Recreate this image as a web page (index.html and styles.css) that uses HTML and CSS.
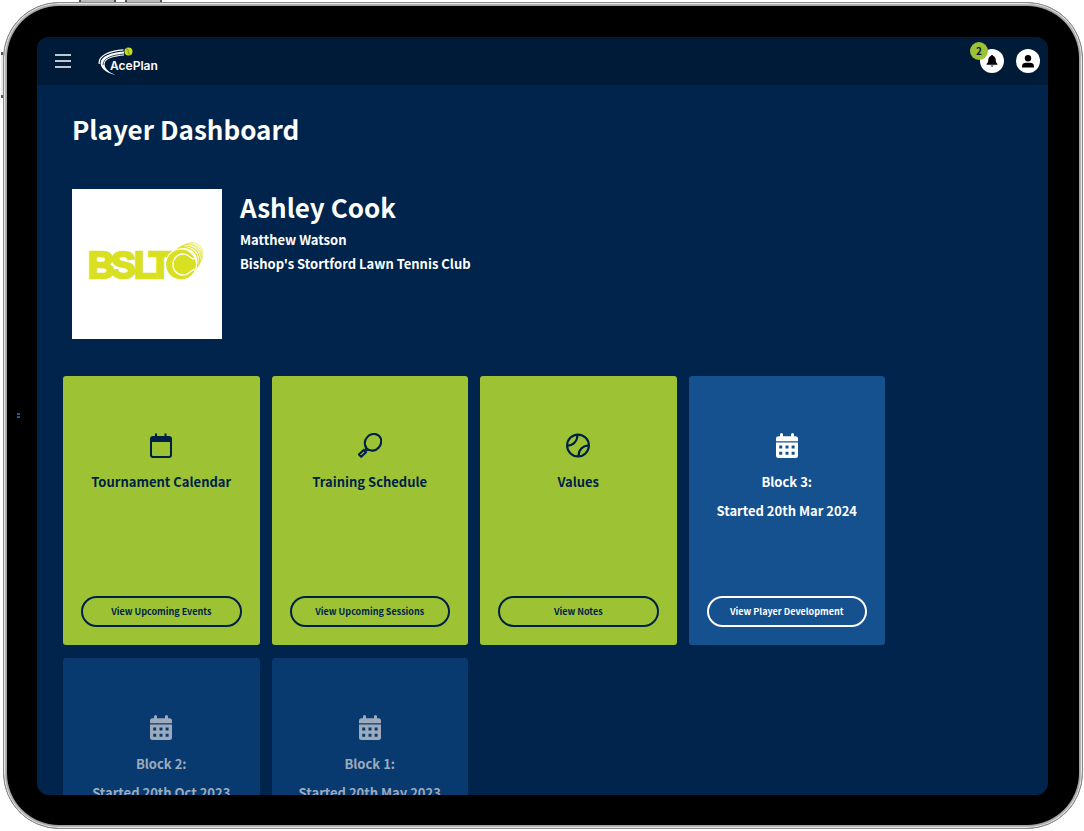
FILE: index.html
```html
<!DOCTYPE html>
<html lang="en">
<head>
<meta charset="utf-8">
<meta name="viewport" content="width=device-width, initial-scale=1">
<title>AcePlan – Player Dashboard</title>
<link rel="stylesheet" href="styles.css">
</head>
<body>
<svg class="sprite" aria-hidden="true">
  <symbol id="calendar-grid" viewBox="0 0 24 26">
    <path fill="currentColor" fill-rule="evenodd" d="M6.500 0a1.500 1.500 0 0 1 1.500 1.500V3.200h8V1.500a1.500 1.500 0 0 1 3 0V3.200h1.500A2.500 2.500 0 0 1 23 5.700V8.200H1V5.700A2.500 2.500 0 0 1 3.500 3.200H5V1.500A1.500 1.500 0 0 1 6.500 0zM1 9.600H23V22.500A2.500 2.500 0 0 1 20.500 25H3.500A2.500 2.500 0 0 1 1 22.500zM4.200 12.600v3h3v-3zM10.500 12.600v3h3v-3zM16.600 12.600v3h3v-3zM4.200 18.700v3h3v-3zM10.500 18.700v3h3v-3zM16.600 18.700v3h3v-3z"/>
  </symbol>
</svg>
<div class="device">
  <span class="side-key key-top-first"></span>
  <span class="side-key key-top-second"></span>
  <span class="side-key key-left"></span>
  <span class="camera"></span>
  <div class="screen">
    <header class="topbar">
      <button class="menu-button" type="button" aria-label="Open menu">
        <svg width="16" height="14" viewBox="0 0 16 14"><path d="M0 1h16M0 7h16M0 13h16" stroke="#fff" stroke-width="1.300"/></svg>
      </button>
      <a class="brand" href="#" aria-label="AcePlan home">
        <svg width="62" height="30" viewBox="0 -1 62 30">
          <path fill="#fff" d="M26 4.600C13 5.600 2.500 9.500 2.600 16.500C2.800 22 10 26.500 17.500 28C10.500 25 6.500 21.500 6.600 17C6.800 11.500 16 9.400 26 8.600Z"/>
          <path fill="none" stroke="#fff" stroke-width="1.200" d="M25.500 2.800C11 3.800 0 9 1.200 17"/>
          <path fill="none" stroke="#001b37" stroke-width="0.800" d="M5 18C5 11 14 8 26 7"/>
          <circle cx="30.500" cy="4.500" r="4" fill="#c3dc22"/>
          <path fill="none" stroke="#526f21" stroke-width="0.700" d="M28 1.600C32 2.500 28.500 6 32.500 7.800"/>
          <text class="brand-name" x="12" y="23">AcePlan</text>
        </svg>
      </a>
      <nav class="account">
        <button class="round-button" type="button" aria-label="Notifications, 2 unread">
          <svg width="12" height="14" viewBox="0 0 13 14"><path d="M6.500 0.500C7.200 0.500 7.600 1 7.700 1.600C9.600 2.200 10.500 3.700 10.500 5.500C10.500 8.500 11.500 9.300 12.400 10.200V11H0.600V10.200C1.500 9.300 2.500 8.500 2.500 5.500C2.500 3.700 3.400 2.200 5.300 1.600C5.400 1 5.800 0.500 6.500 0.500ZM5 12H8C7.800 13.700 5.200 13.700 5 12Z"/></svg>
          <span class="badge">2</span>
        </button>
        <button class="round-button" type="button" aria-label="Account">
          <svg width="12" height="13" viewBox="0 0 12 13"><circle cx="6" cy="3.300" r="3.200"/><path d="M0 12.500V11C0 8.700 2 7.700 4 7.700H8C10 7.700 12 8.700 12 11V12.500Z"/></svg>
        </button>
      </nav>
    </header>
    <main class="content">
      <h1 class="page-title">Player Dashboard</h1>
      <section class="profile">
        <div class="club-logo">
          <svg width="118" height="50" viewBox="0 -4 118 50" role="img" aria-label="BSLTC">
            <text class="club-letters" x="0 23 46 61" y="35">BSLT</text>
            <g fill="#fff" stroke="#d9e021" stroke-width="1.100">
              <circle cx="104" cy="10.500" r="11" stroke-opacity="0.400"/>
              <circle cx="102" cy="12.500" r="12" stroke-opacity="0.600"/>
              <circle cx="100" cy="14.500" r="13" stroke-opacity="0.800"/>
              <circle cx="98" cy="16.500" r="13.500"/>
              <circle cx="96" cy="18.500" r="14"/>
            </g>
            <circle cx="93" cy="21.500" r="15.500" fill="#d9e021" stroke="#fff" stroke-width="1.200"/>
            <path d="M108 15.500C105 18 102 13 98 11.500C91 9.500 85 14.500 85 21.500C85 28.500 91 33.500 98 31.500C102 30 103 26.500 108 26" fill="none" stroke="#fff" stroke-width="1.300"/>
          </svg>
        </div>
        <div class="profile-text">
          <h2 class="player-name">Ashley Cook</h2>
          <p class="profile-line">Matthew Watson</p>
          <p class="profile-line">Bishop's Stortford Lawn Tennis Club</p>
        </div>
      </section>
      <section class="cards">
        <article class="card card-green">
          <svg class="card-icon" viewBox="0 0 24 26"><path fill="none" stroke="currentColor" stroke-width="2" d="M2 6a2 2 0 0 1 2-2H20a2 2 0 0 1 2 2V22a2 2 0 0 1-2 2H4a2 2 0 0 1-2-2z"/><path fill="currentColor" d="M2 4H22V9H2zM6 0.500h2V5h-2zM15.500 0.500h2V5h-2z"/></svg>
          <h3 class="card-title">Tournament Calendar</h3>
          <button class="card-button" type="button">View Upcoming Events</button>
        </article>
        <article class="card card-green">
          <svg class="card-icon" viewBox="0 0 24 26"><g fill="none" stroke="currentColor" stroke-width="2.100"><ellipse cx="15" cy="9.300" rx="8.800" ry="7.800" transform="rotate(-48 15 9.300)"/><path d="M8 12.500L7.500 17.500M12.500 17L7.500 17.500" stroke-width="1.700"/><path d="M5.700 16.900L8 19.200L3.200 23.800L0.900 21.500Z" stroke-linejoin="round"/></g></svg>
          <h3 class="card-title">Training Schedule</h3>
          <button class="card-button" type="button">View Upcoming Sessions</button>
        </article>
        <article class="card card-green">
          <svg class="card-icon" viewBox="0 0 24 26"><g fill="none" stroke="currentColor" stroke-width="2.100"><circle cx="12" cy="12.500" r="10.900"/><path d="M1.200 12.500C7.500 12.500 11.500 8 11.500 1.500M12.500 23.500C12.500 17 16.500 12.500 22.800 12.500"/></g></svg>
          <h3 class="card-title">Values</h3>
          <button class="card-button" type="button">View Notes</button>
        </article>
        <article class="card card-blue">
          <svg class="card-icon"><use href="#calendar-grid"/></svg>
          <h3 class="card-title">Block 3:</h3>
          <p class="card-title">Started 20th Mar 2024</p>
          <button class="card-button" type="button">View Player Development</button>
        </article>
        <article class="card card-past">
          <svg class="card-icon"><use href="#calendar-grid"/></svg>
          <h3 class="card-title">Block 2:</h3>
          <p class="card-title">Started 20th Oct 2023</p>
        </article>
        <article class="card card-past">
          <svg class="card-icon"><use href="#calendar-grid"/></svg>
          <h3 class="card-title">Block 1:</h3>
          <p class="card-title">Started 20th May 2023</p>
        </article>
      </section>
    </main>
  </div>
</div>
</body>
</html>
```
FILE: styles.css
```css
* { box-sizing: border-box; }

body {
  margin: 0;
  height: 100vh;
  padding: 2px 1px 2px 3px;
  background: #fff;
  color: #fff;
  font-family: "Noto Sans CJK SC", "Noto Sans", sans-serif;
  font-weight: 700;
  overflow: hidden;
}

h1, h2, h3, p { margin: 0; font-weight: 700; }

button {
  font: inherit;
  color: inherit;
  padding: 0;
  border: 0;
  background: none;
}

.sprite { position: absolute; width: 0; height: 0; }

.device {
  position: relative;
  height: 100%;
  padding: 34px 34px 33px 33px;
  border: 1px solid #8b8c8c;
  border-radius: 56px;
  background: #000;
  box-shadow: inset 0 0 0 1px #e4e5e5, inset 0 0 0 2px #b5b6b6, inset 0 0 0 3px #a0a1a1;
}

.side-key { position: absolute; background: #b9bbba; }

.key-top-first, .key-top-second {
  top: -3px;
  width: 37px;
  height: 2px;
  border: solid #555;
  border-width: 0 2px;
}

.key-top-first { left: 75px; }
.key-top-second { left: 121px; }

.key-left {
  left: -3px;
  top: 49px;
  width: 2px;
  height: 46px;
  border: solid #555;
  border-width: 3px 0;
  background: #e8e9e9;
}

.camera {
  position: absolute;
  left: 13px;
  top: calc(50% - 3px);
  width: 3px;
  height: 5px;
  border: solid #0f5cad;
  border-width: 2px 0;
}

.screen {
  display: flex;
  flex-direction: column;
  height: 100%;
  overflow: hidden;
  border-radius: 12px;
  background: #00244b;
}

.topbar {
  display: flex;
  flex: none;
  align-items: center;
  height: 48px;
  padding: 0 8px 0 18px;
  background: #001b37;
}

.menu-button, .brand { display: flex; }
.brand { margin-left: 27px; }

.brand-name {
  fill: #fff;
  font: 600 12px Inter, sans-serif;
}

.account { display: flex; gap: 12px; margin-left: auto; }

.round-button {
  position: relative;
  display: grid;
  place-items: center;
  width: 24px;
  height: 24px;
  border-radius: 50%;
  background: #fff;
}

.badge {
  position: absolute;
  left: -10px;
  top: -7px;
  width: 18px;
  height: 18px;
  border-radius: 50%;
  background: #9dc334;
  color: #00203f;
  font-size: 10px;
  line-height: 18px;
}

.content { padding: 24px 26px; }

.page-title {
  padding-left: 9px;
  font-size: 26px;
  line-height: 40px;
}

.profile {
  display: flex;
  gap: 18px;
  margin: 40px 9px 37px;
}

.club-logo {
  display: grid;
  place-items: center;
  width: 150px;
  height: 150px;
  background: #fff;
}

.club-letters {
  fill: #d9e021;
  stroke: #d9e021;
  stroke-width: 2.4;
  font: 700 37px "Liberation Sans", sans-serif;
}

.player-name { margin-bottom: 3px; font-size: 26px; line-height: 36px; }
.profile-line { font-size: 13px; line-height: 24px; }

.cards {
  display: grid;
  grid-template-columns: repeat(4, 1fr);
  gap: 13px 12px;
  max-width: 822px;
}

.card {
  display: flex;
  flex-direction: column;
  align-items: center;
  min-height: 269px;
  padding: 57px 18px 18px;
  border-radius: 3px;
}

.card-green { background: #9dc334; color: #001f45; }
.card-blue { background: #15508f; }
.card-past { background: #083a70; color: #9caabb; }

.card-icon { width: 24px; height: 26px; margin-bottom: 8px; }
.card-title { font-size: 13px; line-height: 29px; }

.card-button {
  width: 100%;
  height: 31px;
  margin-top: auto;
  border: 2px solid;
  border-radius: 16px;
  font-size: 9px;
}
```
